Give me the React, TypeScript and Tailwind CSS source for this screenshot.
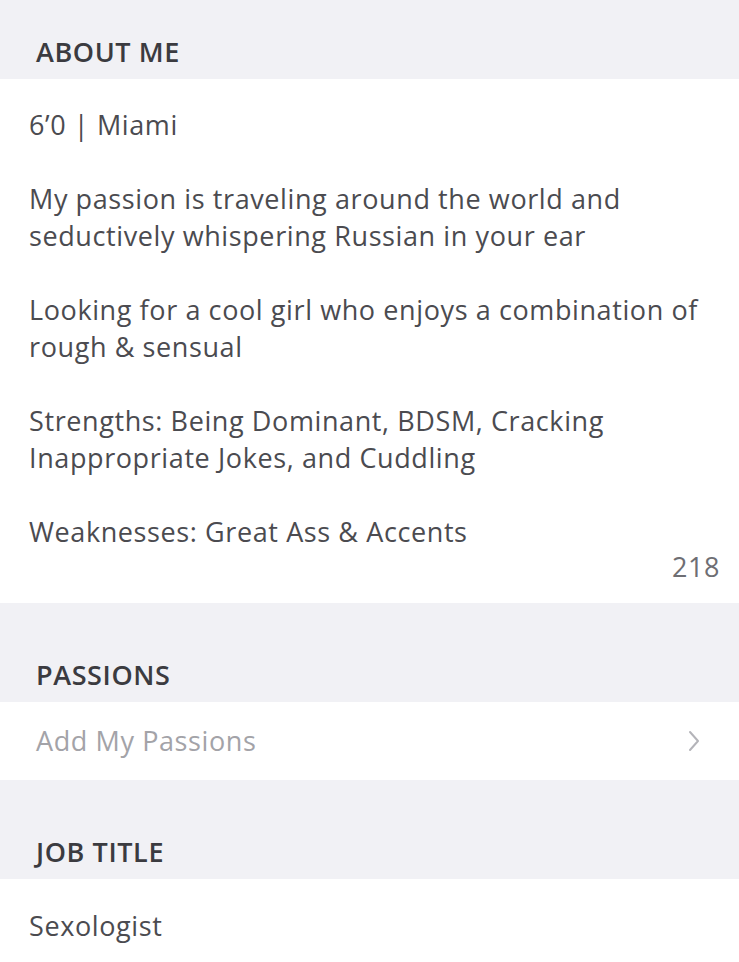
import React from "react";

const font = { fontFamily: "'Open Sans', 'Noto Sans', sans-serif" };

function SectionHeader({ title, tall }: { title: string; tall?: boolean }) {
  return (
    <div
      className={`bg-[#f1f1f5] px-[36px] flex items-end pb-[14px] ${tall ? "h-[99px]" : "h-[79px]"}`}
    >
      <span className="text-[27px] font-semibold text-[#3b3b40] leading-none tracking-[0.6px]">{title}</span>
    </div>
  );
}

export default function App() {
  const paragraphs = [
    ["6’0 | Miami"],
    ["My passion is traveling around the world and", "seductively whispering Russian in your ear"],
    ["Looking for a cool girl who enjoys a combination of", "rough & sensual"],
    ["Strengths: Being Dominant, BDSM, Cracking", "Inappropriate Jokes, and Cuddling"],
    ["Weaknesses: Great Ass & Accents"],
  ];
  return (
    <div className="w-[739px] h-[962px] bg-white overflow-hidden tracking-[0.6px]" style={font}>
      <SectionHeader title="ABOUT ME" />
      <div className="bg-white px-[29px] pt-[27px] text-[27px] leading-[37px] text-[#4b4b50] flex flex-col gap-[37px]">
        {paragraphs.map((p, i) => (
          <div key={i}>
            {p.map((line, j) => (
              <div key={j} className="whitespace-nowrap">{line}</div>
            ))}
          </div>
        ))}
      </div>
      <div className="bg-white px-[19px] pb-[18px] -mt-[2px] text-right text-[27px] leading-[37px] text-[#6e6e73]">218</div>
      <SectionHeader title="PASSIONS" tall />
      <div className="bg-white h-[78px] pl-[36px] pr-[38px] flex items-center justify-between">
        <span className="text-[27px] text-[#a3a3a8]">Add My Passions</span>
        <svg width="14" height="24" viewBox="0 0 14 24" fill="none">
          <path d="M3 3 L11 12 L3 21" stroke="#b4b4b9" strokeWidth="2" strokeLinecap="round" strokeLinejoin="round" />
        </svg>
      </div>
      <SectionHeader title="JOB TITLE" tall />
      <div className="bg-white px-[29px] pt-[28px] text-[27px] leading-[37px] text-[#4b4b50]">Sexologist</div>
    </div>
  );
}
